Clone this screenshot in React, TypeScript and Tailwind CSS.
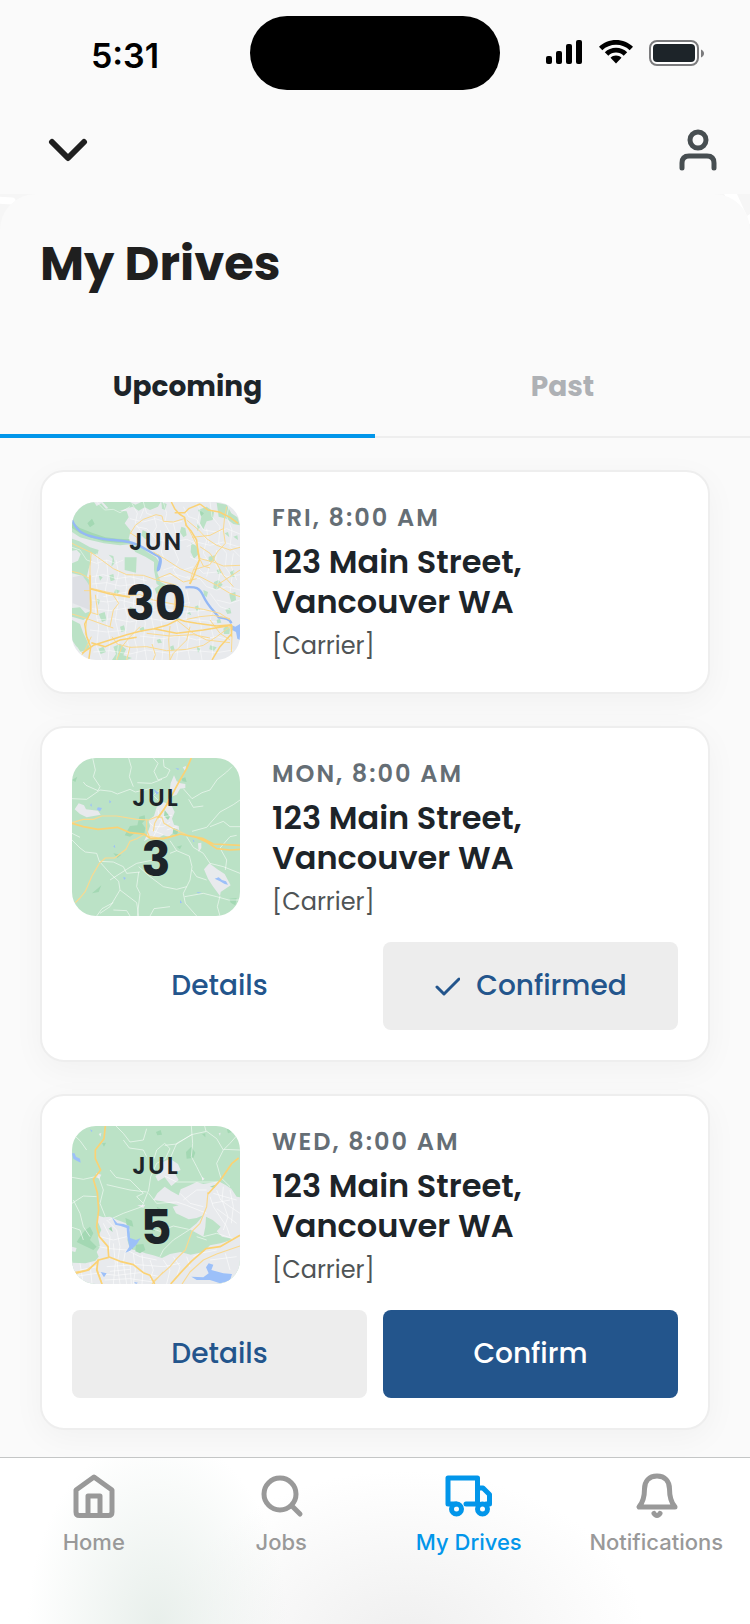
import { useState } from 'react';
import type { ReactNode } from 'react';

type Area = 'portland' | 'forest' | 'valley';
type DriveStatus = 'scheduled' | 'confirmed' | 'pending';

interface Drive {
  id: number;
  month: string;
  day: number;
  time: string;
  address: string;
  carrier: string;
  area: Area;
  status: DriveStatus;
}

interface MapLayers {
  viewBox: string;
  land: string;
  parks: string;
  woods: string;
  town: string;
  streets: string;
  river: string;
  lake: string;
  roads: string;
  highways: string;
}

const drives: Drive[] = [
  { id: 1, month: 'JUN', day: 30, time: 'FRI, 8:00 AM', address: '123 Main Street, Vancouver WA', carrier: '[Carrier]', area: 'portland', status: 'scheduled' },
  { id: 2, month: 'JUL', day: 3, time: 'MON, 8:00 AM', address: '123 Main Street, Vancouver WA', carrier: '[Carrier]', area: 'forest', status: 'confirmed' },
  { id: 3, month: 'JUL', day: 5, time: 'WED, 8:00 AM', address: '123 Main Street, Vancouver WA', carrier: '[Carrier]', area: 'valley', status: 'pending' },
];

const maps: Record<Area, MapLayers> = {
  portland: {
    viewBox: '126 126 504 474',
    land: '#e8eaed',
    parks:
      'M126 126H192L200 138L214 130L228 146L246 142L262 152L290 154L296 172L284 190L302 212L296 236L306 252L270 256L222 250L180 240L150 232L126 216Z M218 126H300L316 134L334 126H392L384 140L360 150L344 142L326 152L308 140L270 152L240 150Z M284 292H320L318 338L284 330Z M126 236L148 244L180 262L206 270L202 284L180 278L184 300L176 326L170 352L150 346L126 340V310L144 302L152 282L140 270L126 272Z M150 352L166 348L180 362L178 378L160 370Z M126 444L150 442L166 460L180 454L176 470L160 480L126 470Z M126 480L150 492L160 520L172 544L180 566L150 576L126 540Z M302 256L330 258L352 276L378 292L390 310L382 338L392 366L410 376L440 378L430 392L404 386L380 372L372 330L372 306L346 290L316 276Z M504 150L530 140L552 156L548 180L530 184L520 208L510 190L514 170Z M560 128L590 134L604 160L622 172L630 196L610 192L590 176L566 170Z M484 250L500 258L506 282L492 296L482 276Z M536 290L556 286L552 304L536 306Z M552 366L566 360L578 374L560 390L550 384Z M600 336L612 330L614 350L602 352Z M374 386L396 370L410 380L396 396L380 402Z M250 560L270 552L288 568L280 586L306 594L290 600H246L258 582Z M206 462L224 456L230 480L216 486Z M454 200L466 204L470 226L460 232L450 216Z M540 556L560 562L552 572L538 568Z M580 506L590 496L600 506L598 522L582 522Z M328 506L340 500L346 510L334 516Z M206 566L220 560L228 576L212 582Z M440 420L452 416L456 428L444 432Z M350 430L362 426L368 440L354 444Z M494 440L504 436L510 448L500 454Z M256 388L270 392L262 402L252 398Z M560 480L570 476L574 488L562 490Z M236 284L250 288L254 310L244 320L248 296Z M338 210L350 216L360 230L346 238L334 226Z M598 402L616 396L618 420L604 426L600 414Z M380 540L390 536L396 548L384 550Z M500 190L510 202L502 214Z M206 346L218 352L210 362Z M238 346L250 342L254 360L242 364Z M300 440L312 446L306 462L296 456Z M270 500L282 496L286 512L274 516Z M394 126L410 132L406 150L396 146Z M584 220L594 216L598 232Z M470 460L480 456L484 466Z M420 560L430 556L434 570L424 574Z M500 560L512 566L504 578Z M200 416L210 420L206 436Z M560 330L570 326L574 340L564 342Z M610 230L622 226L624 240Z M520 390L534 396L530 412L522 406Z M330 384L340 380L344 392L334 396Z M436 470L448 474L442 484Z M586 450L600 444L604 460L592 462Z',
    woods: 'M126 186L150 204L186 218L226 232L262 236L298 238L298 248L262 248L220 244L180 232L150 220L126 204Z M172 190L186 176L194 192L180 202Z M508 150L522 160L514 168Z',
    town: 'M128 352L156 346L170 364L184 388L178 430L184 452L150 438L128 430Z',
    streets:
      'M200 126L224 150L250 148L270 158L300 140 M306 130L322 160L316 190L330 210 M340 126L350 160L372 168L380 200L366 224 M400 126L410 160L404 190L420 220L412 250L432 270 M300 176L340 186L376 176L420 190L456 184 M318 200L350 206L380 240L430 246L470 238L500 250 M390 210L400 240L394 276L404 300 M430 190L440 230L430 262L446 300L430 330L450 360 M460 140L476 170L500 178L520 210L560 216L590 206L630 222 M500 130L510 150L500 200L530 240L520 280L540 310L530 350 M540 126L546 170L570 200L566 250L590 280L586 320L606 350L600 400 M600 126L590 170L606 210L600 260L630 290 M470 260L500 246L540 256L580 246L630 262 M500 320L520 340L560 336L590 350L630 344 M470 350L510 356L530 380L560 390L590 380L630 390 M126 262L150 270L170 300L200 310L230 300L256 310L280 300 M200 280L206 320L196 360L204 400L196 450L206 500L200 560L216 600 M230 300L234 350L226 390L236 440L230 490L240 540L234 600 M258 300L266 340L256 380L264 430L256 480L268 530L260 600 M284 340L290 380L282 430L292 470L286 520L296 560L290 600 M310 340L316 390L310 430L320 480L312 530L322 570L318 600 M340 350L346 400L338 440L346 490L340 540L350 600 M366 380L372 430L364 470L374 520L368 560L376 600 M394 400L400 440L392 480L402 530L396 600 M436 400L446 440L438 480L448 530L440 600 M470 390L478 430L468 470L480 510L472 560L480 600 M510 420L504 460L514 500L508 550L516 600 M546 440L540 490L550 530L546 600 M186 350L220 344L260 356L300 350L350 362 M186 372L230 368L270 378L320 372L370 388 M186 420L230 426L270 420L320 432L370 424L420 436L480 428 M186 446L240 452L290 444L340 456L400 446L460 456L540 450 M200 480L250 476L300 486L350 474L410 484L470 476L560 486 M180 510L230 516L290 510 M190 576L240 572L300 582L350 570L420 580L480 570L560 578L610 570 M330 528L400 536L450 526L500 540L560 530L600 540 M220 410L290 396L340 410 M560 270L556 310L570 340L560 390 M610 280L604 320L620 360 M480 290L500 300L530 296 M400 330L430 320L460 330L490 320 M400 350L440 344L480 356 M530 206L536 250 M342 146L330 176 M140 560L160 590 M560 420L600 430L630 420 M540 400L570 440L600 450',
    river:
      'M126 180C140 214 160 224 196 232C232 242 264 238 296 246C332 252 354 276 380 286C402 298 380 318 384 334 M382 286C398 292 392 312 386 330 M466 382C498 380 508 382 520 408C534 440 556 456 566 472C584 474 600 476 604 490',
    lake: 'M602 494L616 500L630 492V540L622 536L618 516L606 510Z',
    roads:
      'M126 250L150 262L184 278L212 298L250 326L290 344L340 346L380 360L440 376 M300 222L316 196L340 178L378 164L396 168L400 184L430 186L462 176 M370 276L410 300L450 326L480 338L510 350L560 376L600 400L630 410 M462 176L472 200L486 226L502 260L510 296L490 330L478 372 M510 296L550 306L580 318L630 316 M470 180L506 210L530 236L560 256L600 270L630 262 M490 330L540 314L562 276L586 250L580 210L584 170L590 140 M486 232L540 226L580 206 M510 260L540 280L560 310L580 346L610 380 M126 462L166 474L210 490L250 504 M126 334L150 340L180 356 M184 276L180 320L180 380L184 430L182 458L170 480L166 520L178 546 M180 384L230 396L290 408L330 404L370 420L420 430L470 440L520 448L570 460L600 480 M410 380L436 400L432 450L440 480L490 520L530 540L600 548 M162 392L180 392 M184 458L204 464L196 404 M246 530L262 552L300 562L350 560L410 572L470 568L520 556L560 530L606 496 M330 500L300 530L276 560L260 600 M420 498L416 540L420 600 M480 500L470 540L430 580L420 600 M350 520L420 528L490 524L540 534 M470 478L510 470L550 466L600 476 M600 496L606 530L604 576 M540 480L570 520L600 540 M452 420L450 390 M380 356L420 340L460 366L500 356 M246 400L266 430L250 450L240 500 M300 560L290 600 M366 552L376 584L370 600 M510 298L520 318L540 324 M560 376L600 350L630 330 M300 218L330 238 M184 530L160 580L150 590',
    highways:
      'M424 126L434 146L448 162L464 172L468 196L484 214L500 240L504 276L508 300L492 346L480 372 M434 158L464 158L476 146L510 132 M510 132L534 150L568 156L600 172L624 190 M180 346L182 456L164 492L170 530L182 562L176 600 M156 580L190 556L240 540L290 524L330 514L372 506L410 496L446 478L464 484L500 490L560 498L606 494 M184 548L226 560L270 540L320 532 M372 506L440 520L520 510L606 496 M180 386L240 402L300 412 M606 496L604 530 M546 600L570 560L606 520',
  },
  forest: {
    viewBox: '126 114 504 474',
    land: '#bbe2c6',
    parks: '',
    woods:
      'M284 346L300 318L322 316L328 290L344 286L346 300L336 310L346 324L342 346L316 338L300 350Z M430 324L446 330L440 346L428 340Z M454 176L466 172L470 186L458 184Z M598 536L620 534L616 556L602 548Z M126 180L142 170L136 186Z M404 270L420 290L414 300L402 288Z M440 380L456 376L450 388Z M250 400L274 404L262 414Z M186 520L214 496L206 516Z',
    town:
      'M422 190L432 166L440 184L452 190L466 192L466 204L450 206L440 224L424 230L420 204Z M458 142L468 138L466 154Z M380 262L400 246L424 256L434 276L426 296L432 314L446 318L448 334L430 338L416 350L400 346L380 356L358 354L342 364L352 342L360 318L356 300L372 288Z M134 268L146 250L162 256L168 268L204 272L212 284L170 292L150 282Z M504 370L514 368L514 384L506 396Z M522 448L538 430L562 448L584 462L602 496L584 508L572 516L570 528L548 498L534 476Z',
    streets:
      'M188 114L196 150L190 170L210 200L204 212 M204 212L168 196L160 186 M126 236L170 238L210 210L244 214L262 222L300 208L316 216L360 206 M296 114L304 142L298 170L310 200 M370 114L384 130L372 154L384 180L410 170L420 150L402 140L400 118 M322 188L364 190L396 178 M460 206L486 236L516 218L540 210L562 178L590 156L606 140 M476 238L490 262L520 258 M486 334L530 322L570 276L610 254L630 240 M540 320L580 304L600 320L630 320 M126 360L150 384L166 396L200 400L208 424L250 426L280 440L290 460L330 456 M208 424L240 460L266 484L270 510L320 548L326 588 M240 480L290 448L320 430L370 420 M326 456L320 500L330 520L322 588 M326 440L360 470L400 500L440 508L470 500 M420 362L440 392L478 408L486 440L480 480L460 520L466 550L500 588 M440 392L420 400 M470 350L490 382L520 400L540 430L580 440L630 460 M570 384L600 350L620 346 M570 384L590 420L586 450 M464 530L520 520L560 530L596 540L630 540 M570 528L562 560L570 588 M200 588L216 566L250 548 M270 510L240 560L210 580 M360 588L372 566L420 560 M250 570L290 572L300 588 M384 240L370 226L390 210 M126 340L150 352 M356 306L372 320L400 320L420 306 M370 350L390 312L400 290L426 286 M364 330L400 344 M410 330L440 320 M390 300L384 270 M530 480L500 470L486 450',
    river: '',
    lake:
      'M554 476L566 472L576 480L588 484L594 494L584 492L570 484Z M180 256L184 250L186 260Z M204 262L216 264L210 274L200 268Z M436 144L448 146L444 150Z M370 206L386 218L380 224Z M238 240L244 246L238 250Z M250 380L254 374L256 384Z M280 470L288 474L282 480Z M500 516L516 518L504 520Z M488 358L494 364L490 366Z M450 540L456 548L450 550Z',
    roads:
      'M126 308L160 298L190 298L216 288L260 288L320 298L356 300L380 290L396 292L402 310L430 326L470 344 M350 298L350 330L358 350L400 356L440 346 M344 342L320 356L300 364L288 388L254 414L226 414L208 430L186 468L166 514L150 534L136 548 M370 334L374 310L386 288L410 256L416 236',
    highways:
      'M484 114L470 146L450 180L436 206L418 240L402 268L384 294 M126 310L160 320L204 328L262 322L300 338L342 342L362 356L400 356L452 342L490 350L520 356L550 372L630 376 M490 348L530 366L560 386L600 390L630 388',
  },
  valley: {
    viewBox: '126 108 504 474',
    land: '#bbe2c6',
    parks: '',
    woods:
      'M468 186L484 170L496 188L490 204L470 206Z M590 116L600 112L606 126L594 130Z M516 132L526 130L526 142Z M378 126L392 120L396 134L382 136Z M216 160L228 158L222 170Z M166 420L180 410L190 430L180 450L200 470L190 480L160 466L140 456L150 440Z M318 464L340 462L346 480L330 490L316 484Z M364 422L380 410L374 424Z M286 384L306 392L310 410L290 404Z M540 290L556 284L554 294Z M236 416L244 410L248 426Z M380 350L392 356L384 360Z M304 456L300 470L310 480Z',
    town:
      'M202 376L220 382L240 380L262 390L288 400L300 420L292 450L300 476L330 484L346 490L370 496L396 504L420 492L452 486L482 494L520 486L540 466L572 460L596 452L630 432V582H126V518L166 520L196 512L206 500L200 486L210 470L204 440L214 420L204 396Z M370 330L382 310L404 290L424 304L446 316L452 298L480 286L500 276L520 282L566 274L588 286L604 296L620 320L630 322V440L606 446L576 440L560 424L572 410L548 390L528 380L526 410L520 440L490 424L478 418L500 400L520 376L500 384L476 388L438 370L428 350L446 346L396 334Z M394 218L420 206L444 222L452 240L434 248L446 270L424 288L404 262L384 274L376 258L392 248Z M198 250L214 254L208 266L198 262Z M206 132L214 128L212 140Z M322 346L346 344L340 354Z M516 260L524 266L516 272Z M566 130L572 128L570 138Z M126 470L140 474L136 486L126 484Z',
    streets:
      'M126 130L150 152L170 180 M258 108L280 130L300 156L340 150L350 116 M280 150L298 174L340 180L350 200 M126 262L160 268L196 260 M126 340L160 318L200 320 M130 330L150 370L160 410L180 440 M206 260L220 300L210 340L226 380 M240 240L258 262L300 270L340 310L320 320L340 340 M230 284L300 300L350 306 M372 206L380 180L404 160L420 176L406 206L380 220L362 260L356 300L336 350L280 370L236 390 M404 166L440 162L484 134L530 124L560 146L580 180L600 160L630 126 M484 108L488 160L484 200L500 230L520 270 M486 134L440 160L420 206 M528 124L524 108 M580 180L560 220L572 262L600 290 M582 178L630 180 M404 258L440 276L500 276L570 276 M350 410L390 424L430 408L476 418 M390 500L400 480L430 450L480 418 M356 310L380 340L440 336L470 346L530 370 M540 320L550 350L570 380L590 410L600 440 M560 300L572 330L600 350L630 370 M550 310L584 320L620 330 M546 340L600 330 M560 356L620 400 M580 290L576 330L594 380L580 420 M600 300L610 350L604 400 M450 310L480 340L520 350 M460 330L500 300L530 300 M220 400L240 440L236 500 M210 440L250 450L290 440 M230 390L260 420L270 470L262 520 M206 470L240 476L290 480L330 500L380 510 M250 460L256 520L250 582 M286 484L280 520L290 582 M310 490L316 540L310 582 M336 494L340 530L336 582 M150 520L160 582 M180 520L186 582 M130 560L200 550L260 556L330 548L390 560 M140 582L150 540L200 530 M230 530L320 524L400 530L450 520 M240 544L300 538 M224 570L300 566L370 576 M360 510L370 540L360 570 M400 510L420 540L410 582 M430 500L450 530L440 560 M470 500L480 530 M260 510L270 582 M300 520L304 582 M500 440L530 450 M586 490L600 540 M540 510L620 500 M126 412L150 420L160 450 M520 440L560 430L610 446 M490 500L510 490L560 480',
    river: '',
    lake:
      'M246 382L262 400L280 402L298 408L300 444L318 450L332 444L318 466L300 482L286 488L298 470L292 440L290 414L272 408L256 404Z M126 190L134 190L138 200L150 206L152 218L140 212L130 206Z M484 560L520 562L536 550L528 532L536 520L550 524L544 540L580 550L606 552L600 572L570 580L540 570L500 570Z M212 546L230 550L222 562Z M180 118L188 122L184 126Z M312 576L324 578L318 582Z',
    roads:
      'M370 574L420 530L440 506L466 480L486 424L510 400L530 350L534 306 M456 582L480 546L520 510L560 492L630 468 M126 548L170 540L206 514 M204 506L202 540L216 582 M366 582L400 546',
    highways:
      'M226 108L222 146L196 180L196 206L212 240L190 268L202 308L206 360L200 410L208 440L234 470L236 500L270 514L310 524L340 548L360 556L374 582 M136 550L176 540L206 510L236 502 M204 510L200 540L216 582 M422 582L450 550L484 514L528 476L570 470L630 436 M534 312L570 272L606 220L626 204',
  },
};

const StreetMap = ({ area }: { area: Area }) => {
  const map = maps[area];
  // the city map has a denser road network, so its lines are thinner
  const dense = area === 'portland';

  return (
    <svg viewBox={map.viewBox} className="h-full w-full" fill="none" strokeLinejoin="round" aria-hidden="true">
      <rect x="126" y="100" width="504" height="510" fill={map.land} />
      <path d={map.parks} fill="#bbe2c6" />
      <path d={map.town} fill={dense ? '#dddfe4' : '#e8eaed'} />
      <path d={map.woods} fill="#a3d8b3" />
      <path d={map.streets} stroke="#ffffff" strokeOpacity={dense ? 0.7 : 0.55} strokeWidth={dense ? 2 : 3} />
      <path d={map.lake} fill="#9cc0f9" />
      <path d={map.river} stroke="#94b8f5" strokeWidth="7" />
      <path d={map.roads} stroke="#fad98f" strokeWidth={dense ? 3 : 3.5} />
      <path d={map.highways} stroke="#fbd274" strokeWidth={dense ? 4.5 : 5} />
    </svg>
  );
};

const StatusBar = () => (
  <div className="grid h-[106px] grid-cols-3 items-start pt-4 font-['Inter',sans-serif] text-black">
    <div className="pt-5 text-center text-[34px] leading-10 font-semibold">5:31</div>
    <div className="h-[74px] rounded-full bg-black" />
    <div className="flex items-start justify-center gap-4 pt-6">
      <svg viewBox="0 0 37 24" className="h-6 w-[37px]" fill="currentColor">
        <rect x="0" y="16" width="6" height="8" rx="2" />
        <rect x="10" y="11" width="6" height="13" rx="2" />
        <rect x="20" y="4" width="6" height="20" rx="2" />
        <rect x="30" y="0" width="6" height="24" rx="2" />
      </svg>
      <svg viewBox="0 0 34 24" className="h-6 w-[34px]" fill="currentColor">
        <path d="M17 0C23.500 0 29.600 2.500 34 6.800L30.700 10.200C27 6.700 22.200 4.800 17 4.800S7 6.700 3.300 10.200L0 6.800C4.400 2.500 10.500 0 17 0Z" />
        <path d="M17 7.700C21.300 7.700 25.200 9.300 28.200 12.200L24.700 15.700C22.600 13.700 19.900 12.600 17 12.600S11.400 13.700 9.300 15.700L5.800 12.200C8.800 9.300 12.700 7.700 17 7.700Z" />
        <path d="M17 15.600C19.100 15.600 21 16.400 22.500 17.700L17 23.400L11.500 17.700C13 16.400 14.900 15.600 17 15.600Z" />
      </svg>
      <svg viewBox="0 0 56 27" className="h-[27px] w-14">
        <rect x="1" y="1" width="48" height="24" rx="7" fill="#ffffff" stroke="#7b7b7d" strokeWidth="2" />
        <rect x="4" y="4" width="42" height="18" rx="4" fill="#1d2429" />
        <path d="M52 9.500C56 11 56 16 52 17.500Z" fill="#7b7b7d" />
      </svg>
    </div>
  </div>
);

const Header = () => (
  <header className="flex h-[88px] items-center justify-between px-7">
    <button type="button" aria-label="Close" className="flex h-12 w-20 items-center justify-center text-[#1f1f1f]">
      <svg viewBox="0 0 40 24" className="h-6 w-10" fill="none" stroke="currentColor" strokeWidth="6" strokeLinecap="round" strokeLinejoin="round">
        <path d="M4 4L20 20L36 4" />
      </svg>
    </button>
    <button type="button" aria-label="Profile" className="text-[#474e51]">
      <svg viewBox="0 0 48 48" className="h-12 w-12" fill="none" stroke="currentColor" strokeWidth="5" strokeLinecap="round">
        <circle cx="24" cy="14" r="8" />
        <path d="M8 42V37Q8 30 15 30H33Q40 30 40 37V42" />
      </svg>
    </button>
  </header>
);

const DriveCard = ({ drive, onConfirm }: { drive: Drive; onConfirm: (id: number) => void }) => {
  const confirmed = drive.status === 'confirmed';

  return (
    <article className="rounded-3xl border-2 border-[#eeeeee] bg-white p-[30px] shadow-[0_8px_32px_rgba(0,0,0,0.04)]">
      <div className="flex items-start gap-8">
        <div className="relative h-[158px] w-[168px] shrink-0 overflow-hidden rounded-3xl">
          <StreetMap area={drive.area} />
          <div className="absolute inset-0 flex flex-col items-center pt-6 text-[#1d2429]">
            <span className="text-2xl leading-8 font-semibold tracking-[2px]">{drive.month}</span>
            <span className="mt-3.5 text-5xl leading-16 font-bold">{drive.day}</span>
          </div>
        </div>
        <div className="text-[#1d2429]">
          <p className="text-2xl leading-8 font-semibold tracking-[2px] text-[#656e75]">{drive.time}</p>
          <h2 className="mt-2 text-[32px] leading-10 font-semibold">{drive.address}</h2>
          <p className="mt-2 text-2xl leading-8 text-[#4f5456]">{drive.carrier}</p>
        </div>
      </div>

      {drive.status !== 'scheduled' && (
        <div className="mt-6 grid grid-cols-2 gap-4 text-[28px] font-medium text-[#23558c]">
          <button type="button" className={confirmed ? 'h-[88px] rounded-lg' : 'h-[88px] rounded-lg bg-[#ededed]'}>
            Details
          </button>
          {confirmed ? (
            <button type="button" className="flex h-[88px] items-center justify-center gap-4 rounded-lg bg-[#ededed]">
              <svg viewBox="0 0 26 20" className="h-5 w-[26px]" fill="none" stroke="currentColor" strokeWidth="3" strokeLinecap="round" strokeLinejoin="round">
                <path d="M3 11L10 18L25 3" />
              </svg>
              Confirmed
            </button>
          ) : (
            <button type="button" onClick={() => onConfirm(drive.id)} className="h-[88px] rounded-lg bg-[#23558c] text-white">
              Confirm
            </button>
          )}
        </div>
      )}
    </article>
  );
};

const NavItem = ({ label, active, children }: { label: string; active?: boolean; children: ReactNode }) => (
  <a
    href="#"
    aria-current={active ? 'page' : undefined}
    className={`flex flex-col items-center gap-2 text-[22px] leading-7 ${active ? 'text-[#0296ea]' : 'text-[#999999]'}`}
  >
    <svg viewBox="0 0 50 48" className="h-12 w-[50px]" fill="none" stroke="currentColor" strokeWidth="5" strokeLinecap="round" strokeLinejoin="round" aria-hidden="true">
      {children}
    </svg>
    {label}
  </a>
);

const BottomNav = () => (
  <nav className="sticky bottom-0 grid h-[167px] grid-cols-4 items-start border-t border-[#c4c6c6] bg-white bg-[radial-gradient(ellipse_130px_190px_at_21%_100%,#e8efeb,transparent),radial-gradient(ellipse_240px_170px_at_54%_110%,#efefef,transparent)] pt-3.5 font-['Inter',sans-serif] font-medium">
    <NavItem label="Home">
      <path d="M7 18L25 5L43 18V40Q43 43.500 39.500 43.500H10.500Q7 43.500 7 40Z" />
      <path d="M19 43V24H31V43" strokeWidth="5" />
    </NavItem>
    <NavItem label="Jobs">
      <circle cx="24" cy="22" r="16" />
      <path d="M36 34L44 42" />
    </NavItem>
    <NavItem label="My Drives" active>
      <path d="M12 32H4V6H33.500V32H22" />
      <path d="M33.500 16H39L45.500 22.500V32H42" />
      <circle cx="12.500" cy="37" r="5" />
      <circle cx="38.500" cy="37" r="5" />
    </NavItem>
    <NavItem label="Notifications">
      <path d="M26 4C18 4 13.500 9.500 13.500 17C13.500 27 11.500 31 8 35H44C40.500 31 38.500 27 38.500 17C38.500 9.500 34 4 26 4Z" />
      <path d="M23 41.500C24.500 44 27.500 44 29 41.500" strokeWidth="5" />
    </NavItem>
  </nav>
);

export default function App() {
  const [tab, setTab] = useState('Upcoming');
  const [items, setItems] = useState(drives);

  const handleConfirm = (id: number) => {
    setItems(items.map((d) => (d.id === id ? { ...d, status: 'confirmed' } : d)));
  };

  return (
    <div className="flex min-h-screen flex-col bg-[#fafafa] font-['Poppins','Inter',sans-serif]">
      <StatusBar />
      <Header />

      <div className="relative flex-1 bg-[#f6f6f6]">
        {/* map roads showing behind the sheet's rounded corners */}
        <svg viewBox="0 0 36 36" className="absolute top-0 left-0 h-9 w-9" aria-hidden="true">
          <path d="M-4 6L12 7" stroke="#ffffff" strokeWidth="7" strokeLinecap="round" />
        </svg>
        <svg viewBox="0 0 36 36" className="absolute top-0 right-0 h-9 w-9" fill="#ffffff" aria-hidden="true">
          <path d="M10 0H23L33 22L36 20V30H30Z" />
        </svg>
        <main className="relative rounded-t-[36px] bg-[#fafafa]">
          <h1 className="px-10 pt-10 text-5xl leading-[60px] font-bold text-[#1f1f1f]">My Drives</h1>

          <div role="tablist" className="mt-10 grid grid-cols-2">
            {['Upcoming', 'Past'].map((name) => (
              <button
                key={name}
                type="button"
                role="tab"
                aria-selected={tab === name}
                onClick={() => setTab(name)}
                className={
                  tab === name
                    ? 'h-[104px] border-b-4 border-[#0296ea] pt-1.5 text-[28px] font-bold text-[#1d2429]'
                    : 'h-[104px] border-b-2 border-[#eeeeee] pt-1 text-[28px] font-bold text-[#aeb1b5]'
                }
              >
                {name}
              </button>
            ))}
          </div>

          <section className="flex flex-col gap-8 px-10 pt-8 pb-[27px]">
            {tab === 'Upcoming' && items.map((drive) => <DriveCard key={drive.id} drive={drive} onConfirm={handleConfirm} />)}
          </section>
        </main>
      </div>

      <BottomNav />
    </div>
  );
}
